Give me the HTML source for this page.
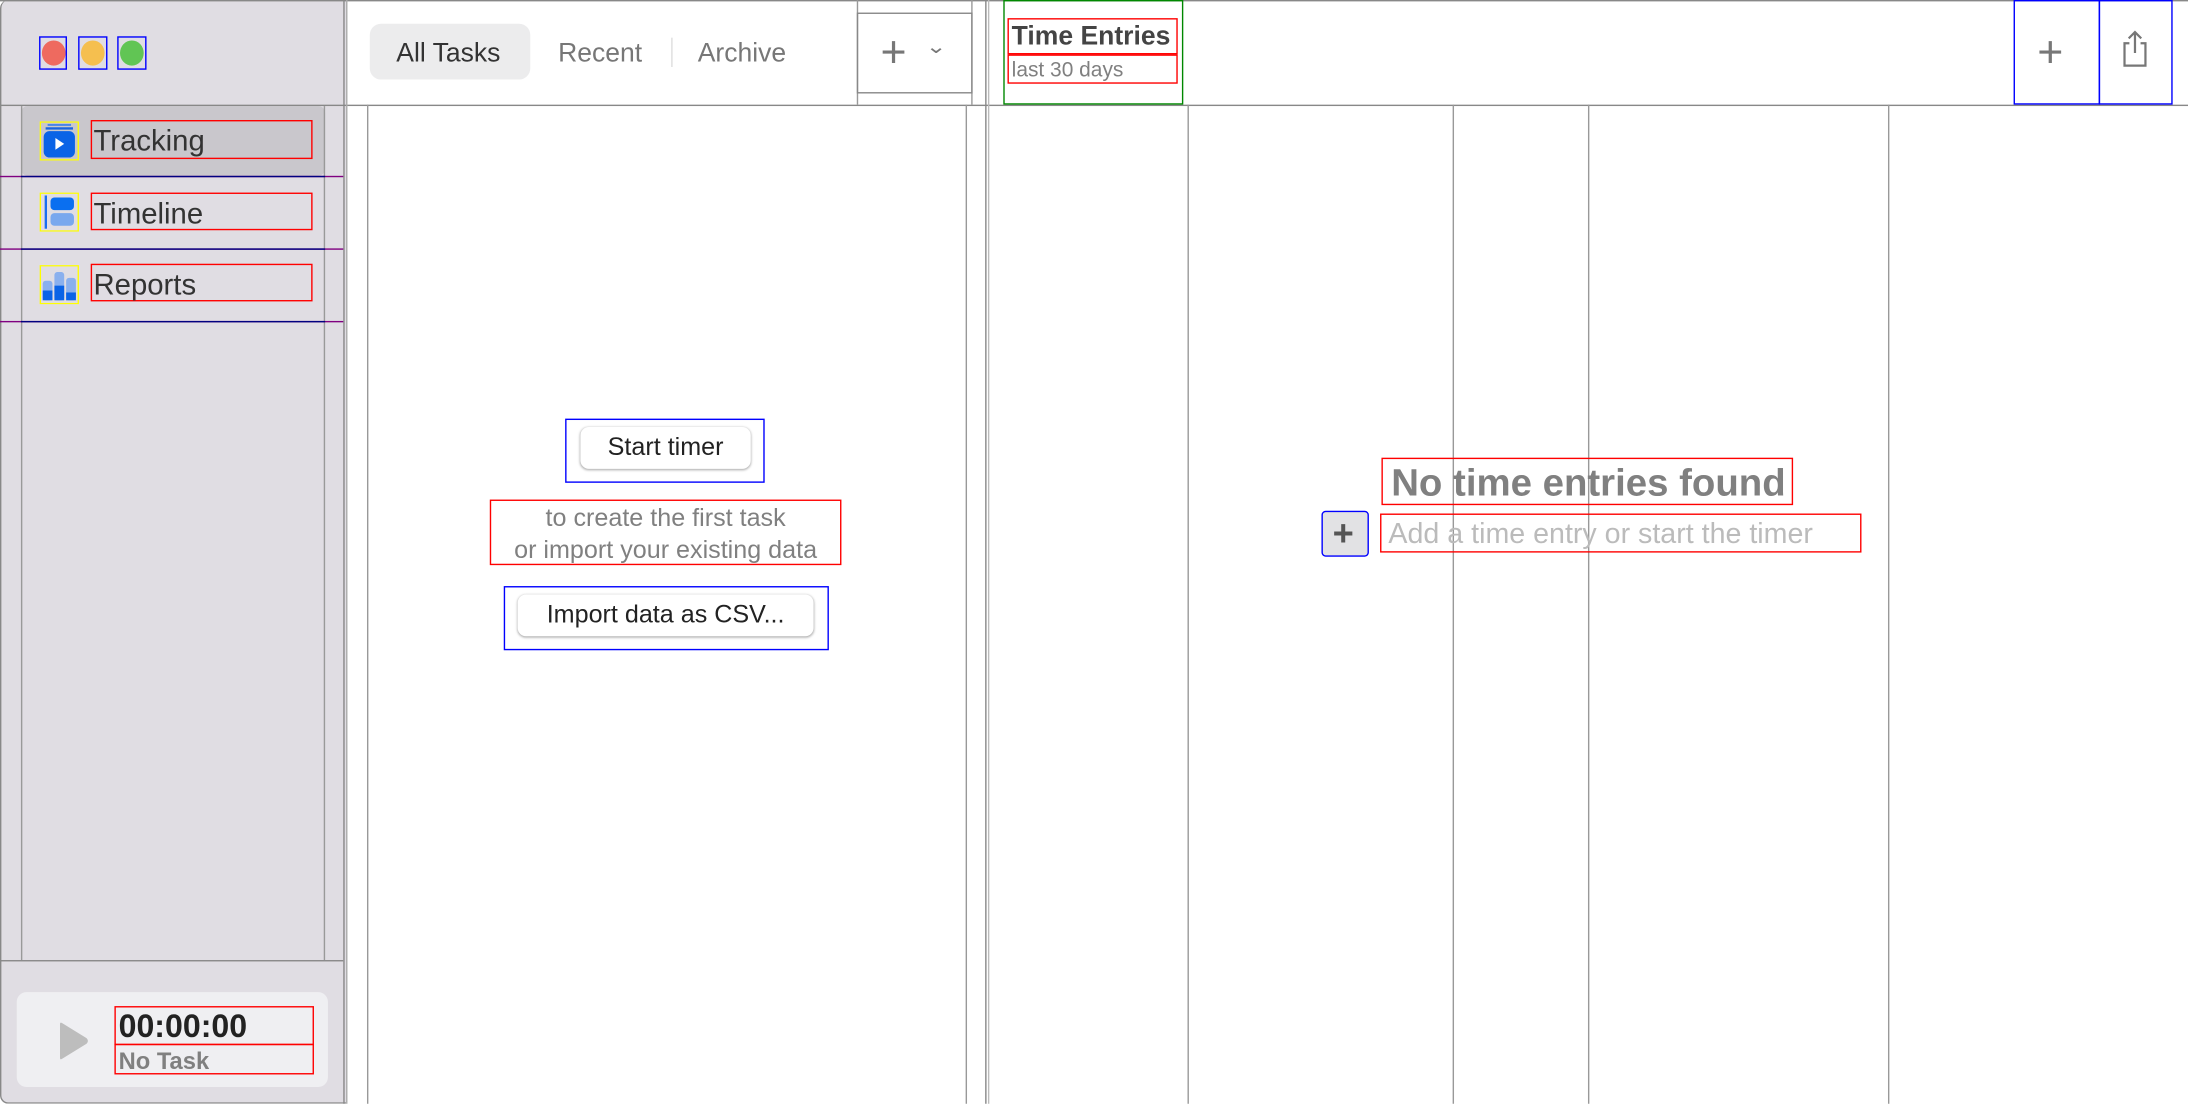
<!DOCTYPE html>
<html><head><meta charset="utf-8"><style>
html,body{margin:0;padding:0;width:2188px;height:1104px;overflow:hidden;background:#fff}
#w{position:absolute;left:0;top:0;width:1568px;height:791.2px;transform:scale(1.39541);transform-origin:0 0;font-family:"Liberation Sans",sans-serif;background:#fff}
.a{position:absolute;box-sizing:border-box}
.t{position:absolute;white-space:nowrap}
.vl{position:absolute;width:1px;background:#999}
.hl{position:absolute;height:1px;background:#999}
.rb{border:1px solid #f00}
.bb{border:1px solid #00f}
</style></head><body><div id="w">
<!-- sidebar -->
<div class="a" style="left:0;top:0;width:248px;height:791px;background:#e0dde3;border-radius:6px 0 0 6px;border-left:1px solid #888;border-bottom:1px solid #888"></div>
<div class="hl" style="left:0;top:0;width:1568px;background:#888"></div>
<div class="hl" style="left:0;top:75px;width:1568px;background:#888"></div>
<div class="vl" style="left:246px;top:0;height:791px;background:#888"></div>
<div class="vl" style="left:248px;top:0;height:791px;background:#aaa"></div>
<!-- traffic lights -->
<div class="a bb" style="left:28px;top:26px;width:20px;height:24px"></div>
<div class="a" style="left:29.5px;top:29px;width:17px;height:18px;border-radius:50%;background:#ee6a5f"></div>
<div class="a bb" style="left:56px;top:26px;width:21px;height:24px"></div>
<div class="a" style="left:58px;top:29px;width:17px;height:18px;border-radius:50%;background:#f5bf4f"></div>
<div class="a bb" style="left:84px;top:26px;width:21px;height:24px"></div>
<div class="a" style="left:86px;top:29px;width:17px;height:18px;border-radius:50%;background:#61c554"></div>
<!-- sidebar list -->
<div class="a" style="left:15px;top:76px;width:218px;height:50px;background:#c9c7cc;border-radius:5px"></div>
<div class="vl" style="left:15px;top:76px;height:612px"></div>
<div class="vl" style="left:232px;top:76px;height:612px"></div>
<div class="hl" style="left:0;top:126px;width:246px;background:#800080"></div>
<div class="hl" style="left:15px;top:126px;width:218px;background:#000080"></div>
<div class="hl" style="left:0;top:178px;width:246px;background:#800080"></div>
<div class="hl" style="left:15px;top:178px;width:218px;background:#000080"></div>
<div class="hl" style="left:0;top:230px;width:246px;background:#800080"></div>
<div class="hl" style="left:15px;top:230px;width:218px;background:#000080"></div>
<div class="hl" style="left:0;top:688px;width:246px;background:#888"></div>
<!-- icons -->
<svg class="a" style="left:28px;top:87px" width="29" height="28" viewBox="0 0 20 20">
<rect x="0.3" y="0.3" width="19.4" height="19.4" fill="none" stroke="#ff0" stroke-width="0.7"/>
<rect x="4" y="1.3" width="12" height="1" fill="#4a86e8"/><rect x="3" y="3" width="14" height="1.2" fill="#1a66e0"/>
<rect x="2" y="5" width="16" height="13.5" rx="3" fill="#0a63e6"/><path d="M8 8.5 L12.5 11.5 L8 14.5Z" fill="#fff"/></svg>
<svg class="a" style="left:28px;top:138px" width="29" height="28" viewBox="0 0 20 20">
<rect x="0.3" y="0.3" width="19.4" height="19.4" fill="none" stroke="#ff0" stroke-width="0.7"/>
<rect x="2.5" y="1.5" width="1.2" height="17" fill="#1a6ef0"/><rect x="5.5" y="2.5" width="12" height="6.5" rx="2" fill="#0a6ff0"/><rect x="5.5" y="10.5" width="12" height="6.5" rx="2" fill="#79a8ee"/></svg>
<svg class="a" style="left:28px;top:190px" width="29" height="28" viewBox="0 0 20 20">
<rect x="0.3" y="0.3" width="19.4" height="19.4" fill="none" stroke="#ff0" stroke-width="0.7"/>
<rect x="1.5" y="8" width="5" height="10" rx="1.5" fill="#8ab0ee"/><rect x="7.5" y="3.5" width="5" height="14.5" rx="1.5" fill="#8ab0ee"/><rect x="13.5" y="6.5" width="5" height="11.5" rx="1.5" fill="#8ab0ee"/>
<rect x="1.5" y="13" width="5" height="5" fill="#0a63e6"/><rect x="7.5" y="10.5" width="5" height="7.5" fill="#0a63e6"/><rect x="13.5" y="14" width="5" height="4" fill="#0a63e6"/></svg>
<div class="a rb" style="left:65px;top:86px;width:159px;height:28px"></div>
<div class="t" style="left:67px;top:90px;font-size:21px;color:#333">Tracking</div>
<div class="a rb" style="left:65px;top:138px;width:159px;height:27px"></div>
<div class="t" style="left:67px;top:142px;font-size:21px;color:#333">Timeline</div>
<div class="a rb" style="left:65px;top:189px;width:159px;height:27px"></div>
<div class="t" style="left:67px;top:193px;font-size:21px;color:#333">Reports</div>
<!-- timer card -->
<div class="a" style="left:12px;top:711px;width:223px;height:68px;background:#efeff2;border-radius:7px"></div>
<svg class="a" style="left:40px;top:731px" width="26" height="30" viewBox="0 0 26 30"><path d="M3 3 Q3 1 5 2.5 L22 13 Q24 15 22 17 L5 27.5 Q3 29 3 27Z" fill="#bdbdbd"/></svg>
<div class="a rb" style="left:82px;top:721px;width:143px;height:28px"></div>
<div class="a rb" style="left:82px;top:748px;width:143px;height:22px"></div>
<div class="t" style="left:85px;top:722px;font-size:23px;font-weight:bold;color:#222">00:00:00</div>
<div class="t" style="left:85px;top:751px;font-size:17px;font-weight:bold;color:#808080">No Task</div>
<!-- middle header -->
<div class="a" style="left:265px;top:17px;width:115px;height:40px;background:#ececed;border-radius:8px"></div>
<div class="t" style="left:284px;top:28px;font-size:19px;color:#333">All Tasks</div>
<div class="t" style="left:400px;top:28px;font-size:19px;color:#777">Recent</div>
<div class="vl" style="left:481px;top:27px;height:21px;background:#ddd"></div>
<div class="t" style="left:500px;top:28px;font-size:19px;color:#777">Archive</div>
<div class="vl" style="left:614px;top:0;height:75px"></div>
<div class="vl" style="left:696px;top:0;height:75px"></div>
<div class="a" style="left:614px;top:9px;width:83px;height:58px;border:1px solid #888"></div>
<div class="t" style="left:631px;top:19px;font-size:32px;color:#777;font-weight:300">+</div>
<div class="t" style="left:665px;top:25px;font-size:14px;color:#777;transform:scaleX(1.3)">⌄</div>
<!-- middle body lines -->
<div class="vl" style="left:263px;top:75px;height:716px"></div>
<div class="vl" style="left:692px;top:75px;height:716px"></div>
<div class="vl" style="left:706px;top:0;height:791px;background:#888"></div>
<div class="vl" style="left:708px;top:0;height:791px;background:#bbb"></div>
<!-- middle empty state -->
<div class="a bb" style="left:405px;top:300px;width:143px;height:46px"></div>
<div class="a" style="left:416px;top:306px;width:122px;height:30px;background:#fff;border-radius:6px;box-shadow:0 0.5px 2px rgba(0,0,0,.35)"></div>
<div class="t" style="left:416px;top:310px;width:122px;text-align:center;font-size:18px;color:#222">Start timer</div>
<div class="a rb" style="left:351px;top:358px;width:252px;height:47px"></div>
<div class="t" style="left:351px;top:360px;width:252px;text-align:center;font-size:18px;color:#808080;line-height:23px">to create the first task<br>or import your existing data</div>
<div class="a bb" style="left:361px;top:420px;width:233px;height:46px"></div>
<div class="a" style="left:371px;top:426px;width:212px;height:30px;background:#fff;border-radius:6px;box-shadow:0 0.5px 2px rgba(0,0,0,.35)"></div>
<div class="t" style="left:371px;top:430px;width:212px;text-align:center;font-size:18px;color:#222">Import data as CSV...</div>
<!-- right header -->
<div class="a" style="left:719px;top:0;width:129px;height:75px;border:1px solid #080"></div>
<div class="a rb" style="left:722px;top:13px;width:122px;height:26px"></div>
<div class="a rb" style="left:722px;top:39px;width:122px;height:21px"></div>
<div class="t" style="left:725px;top:16px;font-size:19px;font-weight:bold;color:#444">Time Entries</div>
<div class="t" style="left:725px;top:42px;font-size:15px;color:#808080">last 30 days</div>
<div class="a bb" style="left:1443px;top:0;width:62px;height:75px"></div>
<div class="a bb" style="left:1504px;top:0;width:53px;height:75px"></div>
<div class="t" style="left:1460px;top:19px;font-size:32px;color:#777;font-weight:300">+</div>
<svg class="a" style="left:1518px;top:21px" width="24" height="28" viewBox="0 0 24 28"><path d="M8 10 H4.5 V26 H19.5 V10 H16" fill="none" stroke="#777" stroke-width="1.6"/><path d="M12 2 V17 M7.5 6.5 L12 2 L16.5 6.5" fill="none" stroke="#777" stroke-width="1.6"/></svg>
<!-- right columns -->
<div class="vl" style="left:851px;top:75px;height:716px"></div>
<div class="vl" style="left:1041px;top:75px;height:716px"></div>
<div class="vl" style="left:1138px;top:75px;height:716px"></div>
<div class="vl" style="left:1353px;top:75px;height:716px"></div>
<!-- right empty -->
<div class="a rb" style="left:990px;top:328px;width:295px;height:34px"></div>
<div class="t" style="left:997px;top:330px;font-size:27.5px;font-weight:bold;color:#808080">No time entries found</div>
<div class="a rb" style="left:989px;top:368px;width:345px;height:28px"></div>
<div class="t" style="left:995px;top:371px;font-size:20.5px;color:#bbb">Add a time entry or start the timer</div>
<div class="a" style="left:947px;top:366px;width:34px;height:33px;background:#e2e2e4;border:1px solid #00f;border-radius:3px"></div>
<div class="t" style="left:955px;top:367px;font-size:26px;font-weight:bold;color:#555">+</div>
</div></body></html>
